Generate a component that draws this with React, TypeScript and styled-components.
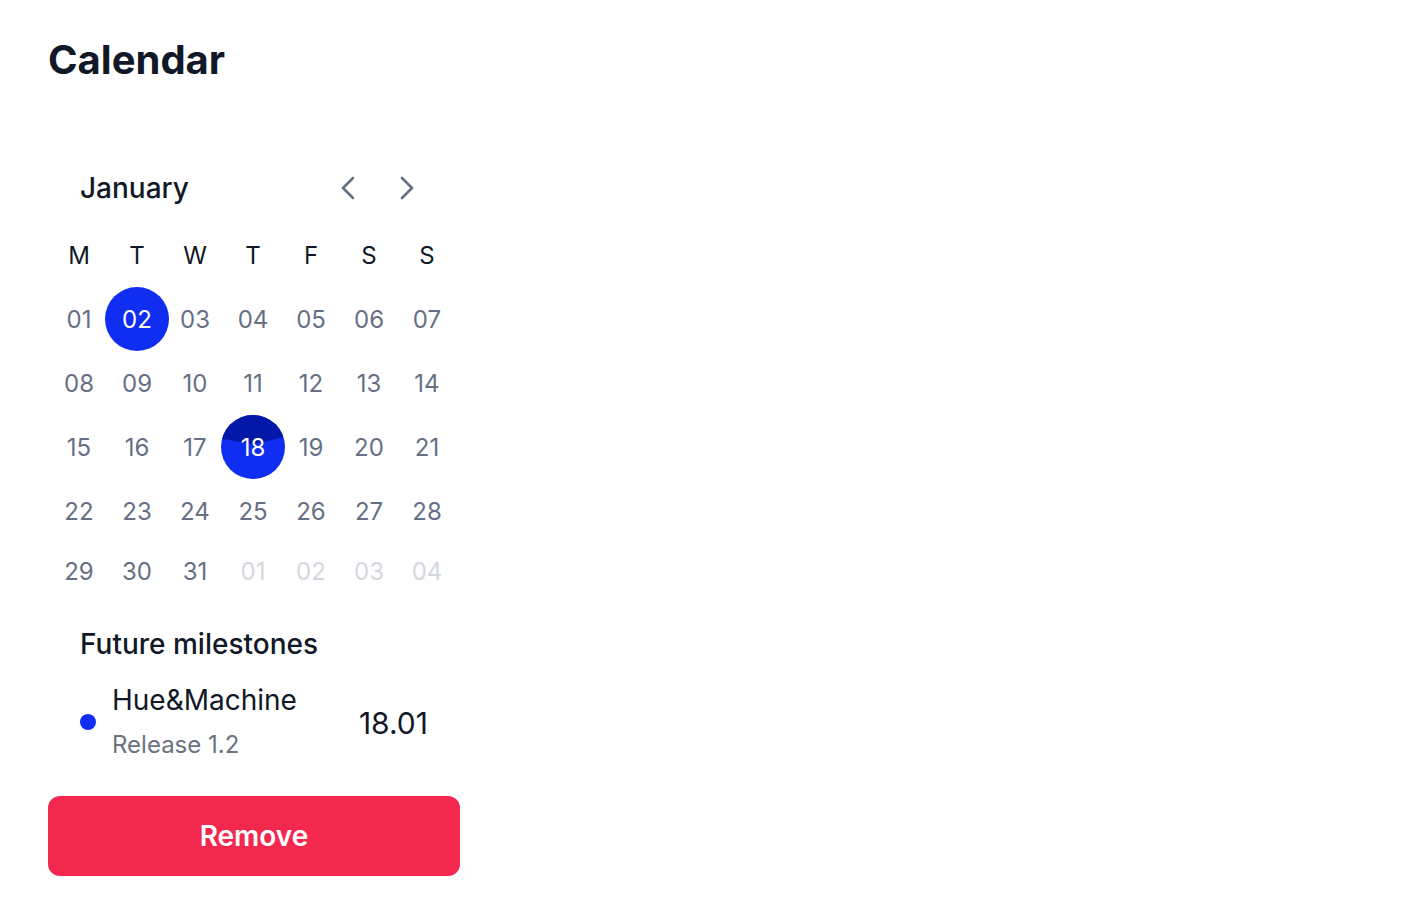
import React from 'react'
import styled, { createGlobalStyle } from 'styled-components'

const GlobalStyle = createGlobalStyle`
  body {
    margin: 0;
    background: #ffffff;
    font-family: Inter, "Noto Sans", sans-serif;
  }
`

const Page = styled.div`
  padding: 36px 48px 32px;
`

const Title = styled.h1`
  margin: 0;
  font-size: 40px;
  line-height: 48px;
  font-weight: 700;
  color: #111827;
`

const Panel = styled.div`
  width: 412px;
  margin-top: 80px;
  display: flex;
  flex-direction: column;
`

const MonthBar = styled.div`
  display: flex;
  align-items: center;
  height: 48px;
  padding: 0 37px 0 32px;
`

const MonthName = styled.div`
  flex: 1;
  font-size: 28px;
  font-weight: 500;
  color: #111827;
`

const NavGroup = styled.div`
  display: flex;
  gap: 27px;
`

const NavButton = styled.button`
  width: 32px;
  height: 32px;
  padding: 0;
  border: 0;
  background: none;
  display: flex;
  align-items: center;
  justify-content: center;
  cursor: pointer;
`

const Grid = styled.div`
  display: grid;
  grid-template-columns: repeat(7, 58px);
  grid-template-rows: repeat(5, 64px) 56px;
  padding-left: 2px;
  margin-top: 11px;
`

const WeekDay = styled.div`
  display: flex;
  align-items: center;
  justify-content: center;
  font-size: 24px;
  color: #111827;
`

const DayCell = styled.div`
  display: flex;
  align-items: center;
  justify-content: center;
`

const Day = styled.div<{ $muted?: boolean; $selected?: boolean }>`
  position: relative;
  width: 64px;
  height: 64px;
  flex: none;
  border-radius: 50%;
  overflow: hidden;
  display: flex;
  align-items: center;
  justify-content: center;
  font-size: 24px;
  color: ${p => (p.$selected ? '#ffffff' : p.$muted ? '#d3d8e0' : '#667085')};
  background: ${p => (p.$selected ? '#0f2ef2' : 'transparent')};
`

const Wave = styled.svg`
  position: absolute;
  inset: 0;
`

const DayLabel = styled.span`
  position: relative;
`

const SectionTitle = styled.div`
  margin-top: 29px;
  padding: 0 32px;
  font-size: 28px;
  line-height: 32px;
  font-weight: 500;
  color: #111827;
`

const Milestone = styled.div`
  margin-top: 24px;
  padding: 0 32px;
  display: flex;
  align-items: center;
  gap: 16px;
`

const Dot = styled.span`
  width: 16px;
  height: 16px;
  border-radius: 50%;
  background: #0f2ef2;
  flex: none;
`

const MilestoneText = styled.div`
  flex: 1;
  display: flex;
  flex-direction: column;
  gap: 15px;
`

const MilestoneName = styled.div`
  font-size: 28px;
  line-height: 32px;
  color: #111827;
`

const MilestoneSub = styled.div`
  font-size: 24px;
  line-height: 28px;
  color: #6b7280;
`

const MilestoneDate = styled.div`
  font-size: 30px;
  color: #111827;
  padding-top: 2px;
`

const RemoveButton = styled.button`
  margin-top: 37px;
  height: 80px;
  border: 0;
  border-radius: 12px;
  background: #f2284f;
  color: #ffffff;
  font-family: inherit;
  font-size: 28px;
  font-weight: 600;
  cursor: pointer;
`

const Chevron = ({ dir }: { dir: 'left' | 'right' }) => (
  <svg width="16" height="24" viewBox="0 0 16 24" fill="none">
    <polyline
      points={dir === 'left' ? '13,2 3,12 13,22' : '3,2 13,12 3,22'}
      stroke="#667085"
      strokeWidth="2.6"
      strokeLinecap="round"
      strokeLinejoin="round"
    />
  </svg>
)

const weekDays = ['M', 'T', 'W', 'T', 'F', 'S', 'S']

const pad = (n: number) => String(n).padStart(2, '0')

const days = [
  ...Array.from({ length: 31 }, (_, i) => ({ label: pad(i + 1), muted: false })),
  ...Array.from({ length: 4 }, (_, i) => ({ label: pad(i + 1), muted: true })),
]

export default function App() {
  return (
    <Page>
      <GlobalStyle />
      <Title>Calendar</Title>
      <Panel>
        <MonthBar>
          <MonthName>January</MonthName>
          <NavGroup>
            <NavButton><Chevron dir="left" /></NavButton>
            <NavButton><Chevron dir="right" /></NavButton>
          </NavGroup>
        </MonthBar>
        <Grid>
          {weekDays.map((d, i) => (
            <WeekDay key={i}>{d}</WeekDay>
          ))}
          {days.map((d, i) => {
            const selected = !d.muted && (d.label === '02' || d.label === '18')
            return (
              <DayCell key={i}>
                <Day $muted={d.muted} $selected={selected}>
                  {selected && d.label === '18' && (
                    <Wave width="64" height="64" viewBox="0 0 64 64">
                      <path d="M0 0 H64 V22 C52 24 42 28 32 29 C22 28 12 25 0 24 Z" fill="#0418a8" />
                    </Wave>
                  )}
                  <DayLabel>{d.label}</DayLabel>
                </Day>
              </DayCell>
            )
          })}
        </Grid>
        <SectionTitle>Future milestones</SectionTitle>
        <Milestone>
          <Dot />
          <MilestoneText>
            <MilestoneName>Hue&amp;Machine</MilestoneName>
            <MilestoneSub>Release 1.2</MilestoneSub>
          </MilestoneText>
          <MilestoneDate>18.01</MilestoneDate>
        </Milestone>
        <RemoveButton>Remove</RemoveButton>
      </Panel>
    </Page>
  )
}
